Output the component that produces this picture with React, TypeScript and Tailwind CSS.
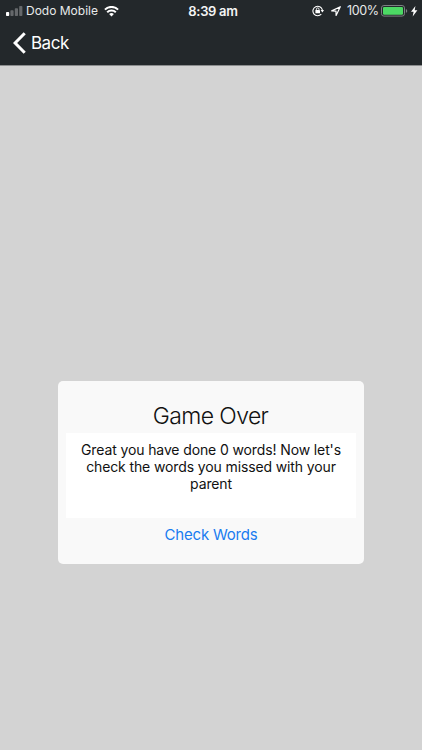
function SignalIcon() {
  return (
    <svg width="17" height="10" viewBox="0 0 17 10" fill="#ffffff">
      <rect x="0" y="6" width="3.2" height="4" rx="0.8" />
      <rect x="4.4" y="4.2" width="3.2" height="5.8" rx="0.8" opacity="0.3" />
      <rect x="8.8" y="2.2" width="3.2" height="7.8" rx="0.8" opacity="0.3" />
      <rect x="13.2" y="0" width="3.2" height="10" rx="0.8" opacity="0.3" />
    </svg>
  );
}

function WifiIcon() {
  return (
    <svg width="15" height="11" viewBox="0 0 15 11" fill="none" stroke="#ffffff" strokeWidth="2">
      <path d="M0.9 3.6a9.4 9.4 0 0 1 13.2 0" />
      <path d="M3.2 6.3a6.1 6.1 0 0 1 8.6 0" />
      <path d="M7.5 10.4 5.1 8.1a3.4 3.4 0 0 1 4.8 0z" fill="#ffffff" stroke="none" />
    </svg>
  );
}

function RotationLockIcon() {
  return (
    <svg width="12" height="12" viewBox="0 0 12 12" fill="none" stroke="#ffffff">
      <path d="M9.3 9.2A4.8 4.8 0 1 1 10.4 5" strokeWidth="1.1" />
      <path d="M8.6 5.1h3.4L10.4 7.5z" fill="#ffffff" stroke="none" />
      <rect x="3.4" y="5.1" width="4.6" height="3.2" rx="0.4" fill="#ffffff" stroke="none" />
      <path d="M4.4 5.2V4.2a1.3 1.3 0 0 1 2.6 0v1" strokeWidth="0.9" />
    </svg>
  );
}

function LocationIcon() {
  return (
    <svg width="10" height="10" viewBox="0 0 10 10" fill="none" stroke="#ffffff" strokeWidth="1.2" strokeLinejoin="round">
      <path d="M9.3 0.7 0.7 4.9l4.3 0.2 0.1 4.3z" />
    </svg>
  );
}

function BatteryIcon() {
  return (
    <svg width="27" height="12" viewBox="0 0 27 12" fill="none">
      <rect x="0.5" y="0.5" width="23" height="10.6" rx="2.4" stroke="#7c8082" />
      <rect x="2" y="1.9" width="20" height="7.8" rx="1.2" fill="#4cd964" />
      <path d="M24.9 4v3.8a2 2 0 0 0 0-3.8z" fill="#7c8082" />
    </svg>
  );
}

function BoltIcon() {
  return (
    <svg width="7" height="11" viewBox="0 0 7 11" fill="#ffffff">
      <path d="M4.4 0 0 5.8h2.6L1.7 10.4 6.4 4.2H3.7z" />
    </svg>
  );
}

function StatusBar() {
  return (
    <div className="grid h-[22px] grid-cols-3 items-center pl-[6px] pr-[4px] text-[13px] leading-[22px] text-[#e8eaea]">
      <div className="flex items-center whitespace-nowrap">
        <SignalIcon />
        <span className="ml-[3px] w-[73px] text-[12px]">Dodo Mobile</span>
        <span className="ml-[5px]">
          <WifiIcon />
        </span>
      </div>
      <span className="pl-[2px] text-center font-semibold tracking-[-0.3px] text-[#f4f5f5]">8:39 am</span>
      <div className="flex items-center justify-end">
        <RotationLockIcon />
        <span className="ml-[7px]">
          <LocationIcon />
        </span>
        <span className="ml-[6px] w-[32px] text-[12.5px] tracking-[-0.4px]">100%</span>
        <span className="ml-[2px]">
          <BatteryIcon />
        </span>
        <span className="ml-[3px]">
          <BoltIcon />
        </span>
      </div>
    </div>
  );
}

function NavBar() {
  return (
    <div className="flex h-[42px] items-center pl-[13px]">
      <button type="button" className="flex items-center text-[17px] leading-[22px] tracking-[-0.5px] text-white">
        <svg width="13" height="22" viewBox="0 0 13 22" fill="none" stroke="#ffffff" strokeWidth="3">
          <path d="M11.7 1.2 2.1 11l9.6 9.8" />
        </svg>
        <span className="ml-[5px]">Back</span>
      </button>
    </div>
  );
}

function GameOverCard() {
  return (
    <div className="mt-[315px] h-[183px] w-[306px] rounded-[5px] bg-[#f9f9f9] px-2 text-center">
      <h1 className="h-[52px] pt-[19px] pr-px text-[23px] leading-[32px] font-light tracking-[-0.6px] text-[#111111]">
        Game Over
      </h1>
      <div className="h-[85px] bg-white pt-[8px] text-[14px] leading-[17px] tracking-[-0.12px] text-[#111111]">
        <p>Great you have done 0 words! Now let's</p>
        <p>check the words you missed with your</p>
        <p>parent</p>
      </div>
      <button type="button" className="mt-[6px] text-[15px] leading-[22px] tracking-[-0.2px] text-[#1a7cf0]">
        Check Words
      </button>
    </div>
  );
}

export default function App() {
  return (
    <div className="flex h-[750px] w-[422px] flex-col overflow-hidden bg-[#d3d3d3] font-['Inter',sans-serif]">
      <header className="h-[66px] border-b border-[#8b8d8e] bg-[#23282b]">
        <StatusBar />
        <NavBar />
      </header>
      <main className="flex flex-1 flex-col items-start pl-[58px]">
        <GameOverCard />
      </main>
    </div>
  );
}
